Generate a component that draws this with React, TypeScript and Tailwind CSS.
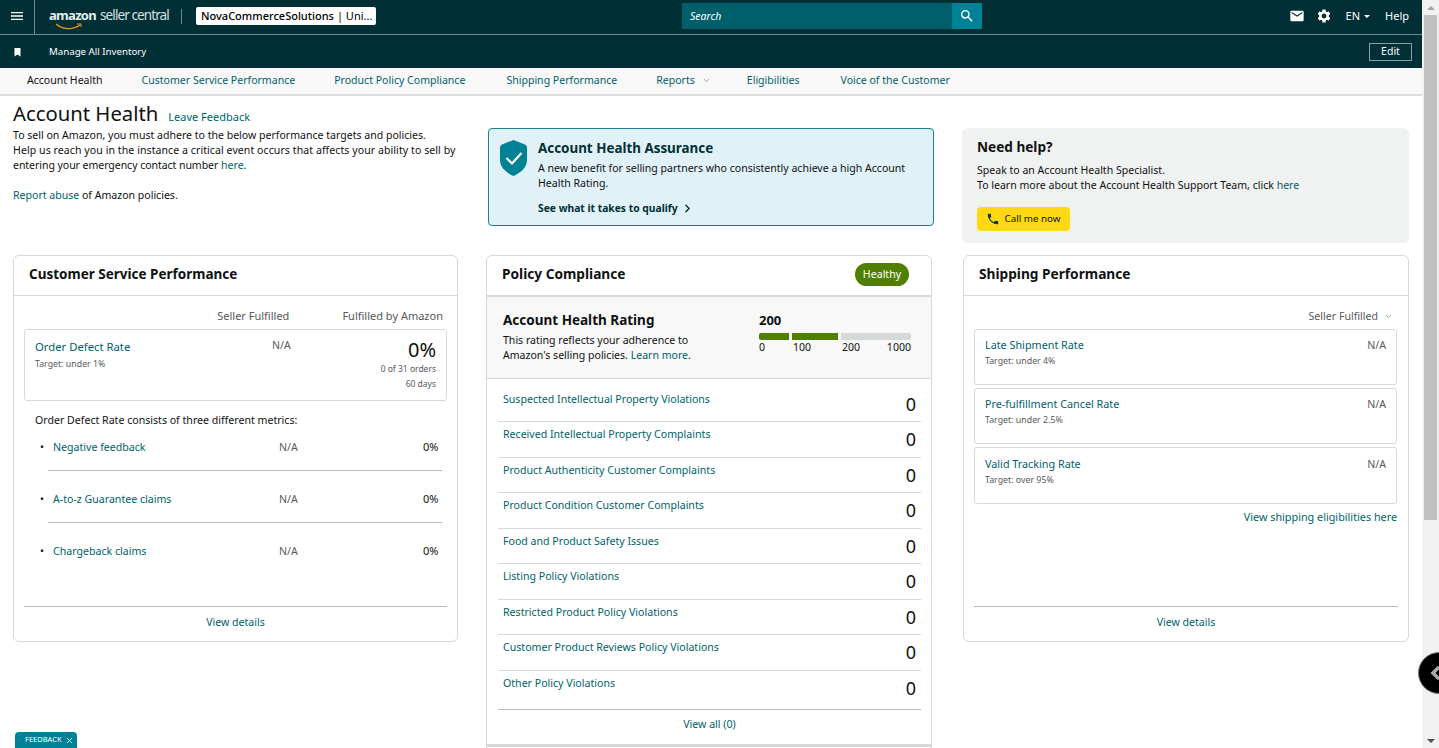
import { ChevronDown, ChevronRight, X } from 'lucide-react';
import { MdEmail, MdMenu, MdPhone, MdSearch, MdSettings } from 'react-icons/md';

const policyRows = [
  'Suspected Intellectual Property Violations',
  'Received Intellectual Property Complaints',
  'Product Authenticity Customer Complaints',
  'Product Condition Customer Complaints',
  'Food and Product Safety Issues',
  'Listing Policy Violations',
  'Restricted Product Policy Violations',
  'Customer Product Reviews Policy Violations',
  'Other Policy Violations',
];

const shipping = [
  { name: 'Late Shipment Rate', target: 'Target: under 4%' },
  { name: 'Pre-fulfillment Cancel Rate', target: 'Target: under 2.5%' },
  { name: 'Valid Tracking Rate', target: 'Target: over 95%' },
];

function Logo() {
  return (
    <div className="relative flex items-baseline whitespace-nowrap leading-none text-[#e6eeee]">
      <span className="text-[13px] font-bold tracking-[-0.7px]">amazon</span>
      <span className="ml-[4px] text-[13.5px] tracking-[-0.9px] text-[#d5e0e0]">seller central</span>
      <svg className="absolute left-[6px] top-[14px]" width="28" height="8" viewBox="0 0 28 8" fill="none">
        <path d="M1 1c7 6 17 6 24 1" stroke="#e5911b" strokeWidth="1.5" />
        <path d="M22 1h4v3" stroke="#e5911b" strokeWidth="1.1" />
      </svg>
    </div>
  );
}

function TopBar() {
  return (
    <div className="flex h-[35px] items-center border-b border-[#6f8a8e] bg-[#002f36] text-white">
      <div className="flex h-full w-[35px] items-center justify-center border-r border-[#6f8a8e] pb-[2px]">
        <MdMenu size={16} />
      </div>
      <div className="flex h-full flex-1 items-center pb-[2px]">
        <div className="ml-[14px] w-[121px]">
          <Logo />
        </div>
        <div className="ml-[11px] h-[15px] w-px bg-[#6f8a8e]" />
        <div className="ml-[14px] flex h-[18px] w-[180px] items-center whitespace-nowrap rounded-[2px] bg-white px-[5px] text-[11px] text-black">
          <span className="font-medium">NovaCommerceSolutions</span>
          <span className="ml-[3px]">| Uni...</span>
        </div>
        <div className="ml-[306px] flex h-[26px] w-[300px]">
          <div className="flex flex-1 items-center bg-[#005f6b] pl-2 pt-[1px] text-[10.5px] italic text-white">Search</div>
          <div className="flex w-[30px] items-center justify-center bg-[#008296]">
            <MdSearch size={16} />
          </div>
        </div>
        <div className="ml-auto flex items-center pr-[13px] text-[11px]">
          <MdEmail size={16} />
          <MdSettings size={16} className="ml-[11px]" />
          <span className="ml-[14px]">EN</span>
          <span className="ml-[4px] h-0 w-0 border-x-[3.5px] border-t-[3.5px] border-x-transparent border-t-white" />
          <span className="ml-[15px]">Help</span>
        </div>
      </div>
    </div>
  );
}

function ShortcutBar() {
  return (
    <div className="flex h-[33px] items-center bg-[#002f36] text-[9.7px] text-white">
      <svg className="ml-[13px]" width="9" height="10" viewBox="0 0 9 10">
        <path d="M1.5 1h6v8.5L4.5 7.5l-3 2z" fill="white" />
      </svg>
      <span className="ml-[27px] pt-[1px]">Manage All Inventory</span>
      <div className="ml-auto mr-[10px] flex h-[18px] w-[43px] items-center justify-center border border-[#8a9fa3] text-[10.5px]">
        Edit
      </div>
    </div>
  );
}

function TabBar() {
  return (
    <div className="flex h-[28px] items-center border-b-2 border-[#dddddd] bg-[#f8f8f8] pb-[1px] pl-[27px] text-[10.55px]">
      <span className="text-[#0f1111]">Account Health</span>
      <span className="ml-[39px] text-[#005f6b]">Customer Service Performance</span>
      <span className="ml-[39px] text-[#005f6b]">Product Policy Compliance</span>
      <span className="ml-[41px] text-[#005f6b]">Shipping Performance</span>
      <span className="ml-[39px] text-[#005f6b]">Reports</span>
      <ChevronDown size={9} strokeWidth={2.5} className="ml-[7px] text-[#999999]" />
      <span className="ml-[36px] text-[#005f6b]">Eligibilities</span>
      <span className="ml-[41px] text-[#005f6b]">Voice of the Customer</span>
    </div>
  );
}

function Intro() {
  return (
    <div className="grid grid-cols-[462px_487px_447px] items-start">
      <div className="pt-[4px]">
        <div className="flex items-baseline">
          <h1 className="text-[20.3px] leading-[26px] text-[#0f1111]">Account Health</h1>
          <span className="ml-[10px] text-[11px] text-[#005f6b]">Leave Feedback</span>
        </div>
        <p className="mt-[2px] text-[10.55px] leading-[15px] text-[#0f1111]">
          To sell on Amazon, you must adhere to the below performance targets and policies.
          <br />
          <span className="tracking-[0.07px]">Help us reach you in the instance a critical event occurs that affects your ability to sell by</span>
          <br />
          <span className="tracking-[-0.06px]">entering your emergency contact number</span> <span className="text-[#005f6b]">here</span>.
        </p>
        <p className="mt-[15px] text-[10.55px] leading-[15px] text-[#0f1111]">
          <span className="text-[#005f6b]">Report abuse</span> of Amazon policies.
        </p>
      </div>
      <div className="relative ml-[13px] mt-[32px] h-[98px] w-[446px] rounded-[4px] border border-[#1e7f8e] bg-[#e0f2f8] pl-[49px] pt-[11px]">
        <svg className="absolute left-[11px] top-[11px]" width="27" height="36" viewBox="0 0 27 36">
          <path d="M13.5 0 25 4.5q2 .8 2 3V20c0 8-7 13-13.5 16C7 33 0 28 0 20V7.5q0-2.2 2-3z" fill="#008296" />
          <path d="m6.5 18 5.5 5.5 9.5-10.5" stroke="white" strokeWidth="2.2" fill="none" />
        </svg>
        <div className="text-[13.4px] font-bold leading-[17px] text-[#002f36]">Account Health Assurance</div>
        <p className="mt-[4px] text-[10.55px] leading-[15px] text-[#0f1111]">
          A new benefit for selling partners who consistently achieve a high Account
          <br />
          Health Rating.
        </p>
        <div className="mt-[10px] flex items-center text-[10.3px] font-bold text-[#002f36]">
          See what it takes to qualify
          <ChevronRight size={13} strokeWidth={2.5} className="ml-[3px]" />
        </div>
      </div>
      <div className="mt-[32px] h-[115px] w-[447px] rounded-[6px] bg-[#f0f1f1] pl-[15px] pt-[10px]">
        <div className="text-[13.6px] font-bold leading-[17px] text-[#0f1111]">Need help?</div>
        <p className="mt-[8px] text-[10.55px] leading-[15px] text-[#0f1111]">
          Speak to an Account Health Specialist.
          <br />
          To learn more about the Account Health Support Team, click <span className="text-[#005f6b]">here</span>
        </p>
        <button className="mt-[14px] flex h-[24px] w-[93px] items-center justify-center rounded-[4px] bg-[#ffd814] text-[9.8px] text-[#0f1111]">
          <MdPhone size={14} className="mr-[4px] text-[#0f3d36]" />
          Call me now
        </button>
      </div>
    </div>
  );
}

function MetricRow({ name, rowClass }: { name: string; rowClass: string }) {
  return (
    <div className={`ml-[34px] mr-[15px] flex pl-[5px] text-[10.6px] leading-[15px] ${rowClass}`}>
      <span className="-ml-[13px] w-[13px] text-[#0f1111]">•</span>
      <span className="w-[226px] text-[#005f6b]">{name}</span>
      <span className="w-[40px] text-[#565959]">N/A</span>
      <span className="-mt-[1px] flex-1 pr-[4px] text-right text-[11px] tracking-tight text-[#0f1111]">0%</span>
    </div>
  );
}

function CustomerCard() {
  return (
    <div className="flex h-[387px] w-[445px] flex-col rounded-[6px] border border-[#d5d9d9] bg-white">
      <div className="flex h-[40px] shrink-0 items-center border-b border-[#d5d9d9] pb-[2px] pl-[15px] text-[13.5px] font-bold text-[#0f1111]">
        Customer Service Performance
      </div>
      <div className="flex justify-end px-[14px] pt-[12px] text-[11px] leading-[15px] text-[#565959]">
        <span className="mr-[53px]">Seller Fulfilled</span>
        <span>Fulfilled by Amazon</span>
      </div>
      <div className="mx-[10px] mt-[6px] flex h-[72px] rounded-[3px] border border-[#d5d9d9] px-[10px] pt-[9px]">
        <div className="w-[237px]">
          <div className="text-[11.3px] leading-[16px] text-[#005f6b]">Order Defect Rate</div>
          <div className="mt-[3px] text-[8.8px] leading-[12px] text-[#565959]">Target: under 1%</div>
        </div>
        <div className="-mt-[1px] w-[40px] text-[10.55px] leading-[15px] text-[#565959]">N/A</div>
        <div className="flex-1 text-right">
          <div className="text-[20px] leading-[22px] text-[#0f1111]">0%</div>
          <div className="text-[8.5px] leading-[15px] text-[#565959]">0 of 31 orders</div>
          <div className="text-[8.5px] leading-[15px] text-[#565959]">60 days</div>
        </div>
      </div>
      <div className="ml-[21px] mt-[12px] text-[10.6px] leading-[15px] text-[#0f1111]">
        Order Defect Rate consists of three different metrics:
      </div>
      <MetricRow name="Negative feedback" rowClass="h-[43px] border-b border-[#bbbbbb] pt-[12px]" />
      <MetricRow name="A-to-z Guarantee claims" rowClass="h-[52px] border-b border-[#bbbbbb] pt-[21px]" />
      <MetricRow name="Chargeback claims" rowClass="h-[52px] pt-[21px]" />
      <div className="mx-[10px] mt-auto flex h-[35px] items-center justify-center border-t border-[#bbbbbb] pb-[3px] text-[10.6px] text-[#005f6b]">
        View details
      </div>
    </div>
  );
}

function PolicyCard() {
  return (
    <div className="ml-[28px] w-[446px] rounded-t-[6px] border border-[#d5d9d9] bg-white">
      <div className="flex h-[41px] items-center justify-between border-b-2 border-[#d5d9d9] pb-[1px] pl-[15px] pr-[22px]">
        <span className="pb-[1px] text-[13.7px] font-bold text-[#0f1111]">Policy Compliance</span>
        <span className="mb-[1px] flex h-[23px] w-[54px] items-center justify-center rounded-full bg-[#507f00] text-[10.6px] text-white">
          Healthy
        </span>
      </div>
      <div className="flex h-[82px] border-b border-[#d5d9d9] bg-[#f8f8f8] pl-[16px] pt-[15px]">
        <div className="w-[256px]">
          <div className="text-[13.5px] font-bold leading-[17px] text-[#0f1111]">Account Health Rating</div>
          <p className="mt-[4px] text-[10.55px] leading-[15px] text-[#0f1111]">
            This rating reflects your adherence to
            <br />
            Amazon's selling policies. <span className="text-[#005f6b]">Learn more</span>.
          </p>
        </div>
        <div className="w-[152px]">
          <div className="text-[13px] font-bold leading-[17px] text-[#0f1111]">200</div>
          <div className="mt-[4px] flex gap-[3px]">
            <div className="h-[7px] w-[30px] rounded-l-[2px] bg-[#507f00]" />
            <div className="h-[7px] w-[46px] bg-[#507f00]" />
            <div className="h-[7px] w-[70px] rounded-r-[2px] bg-[#d5d9d9]" />
          </div>
          <div className="relative h-[14px] w-[152px] text-[10.55px] leading-[14px] text-[#0f1111]">
            <span>0</span>
            <span className="absolute left-[34px]">100</span>
            <span className="absolute left-[83px]">200</span>
            <span className="absolute right-[0px]">1000</span>
          </div>
        </div>
      </div>
      <div className="pl-[11px] pr-[10px] pt-[7.6px]">
        <div>
          {policyRows.map((r) => (
            <div
              key={r}
              className="flex h-[35.5px] border-b border-[#d5d9d9] pl-[5px] pr-[5px] pt-[5px] last:h-[39.5px] last:border-[#bbbbbb]"
            >
              <span className="flex-1 text-[10.6px] leading-[15px] text-[#005f6b]">{r}</span>
              <span className="mt-[1px] text-[18px] leading-[22px] text-[#0f1111]">0</span>
            </div>
          ))}
        </div>
        <div className="flex h-[34px] items-center justify-center pb-[4px] text-[10.6px] text-[#005f6b]">View all (0)</div>
      </div>
      <div className="h-[8px] border-t-[3px] border-[#d5d9d9]" />
    </div>
  );
}

function ShippingCard() {
  return (
    <div className="ml-[31px] flex h-[387px] w-[446px] flex-col rounded-[6px] border border-[#d5d9d9] bg-white">
      <div className="flex h-[40px] shrink-0 items-center border-b border-[#d5d9d9] pb-[2px] pl-[15px] text-[13.7px] font-bold text-[#0f1111]">
        Shipping Performance
      </div>
      <div className="flex items-center justify-end pr-[15px] pt-[13px] text-[10.6px] leading-[15px] text-[#565959]">
        Seller Fulfilled
        <ChevronDown size={9} strokeWidth={2.5} className="ml-[6px] text-[#999999]" />
      </div>
      <div className="ml-[10px] mr-[11px] mt-[5px] flex flex-col gap-[3px]">
        {shipping.map((s) => (
          <div
            key={s.name}
            className="flex h-[56px] justify-between rounded-[3px] border border-[#d5d9d9] px-[10px] pt-[7px] last:h-[57px] last:pt-[8px]"
          >
            <div>
              <div className="text-[10.8px] leading-[15px] text-[#005f6b]">{s.name}</div>
              <div className="mt-[3px] text-[8.8px] leading-[12px] text-[#565959]">{s.target}</div>
            </div>
            <span className="pt-[1px] text-[10.6px] leading-[15px] text-[#565959]">N/A</span>
          </div>
        ))}
      </div>
      <div className="mt-[5px] pr-[11px] text-right text-[10.8px] leading-[15px] text-[#005f6b]">
        View shipping eligibilities here
      </div>
      <div className="mx-[10px] mt-auto flex h-[35px] items-center justify-center border-t border-[#bbbbbb] pb-[3px] text-[10.6px] text-[#005f6b]">
        View details
      </div>
    </div>
  );
}

function Scrollbar() {
  return (
    <div className="flex w-[17px] flex-col items-center bg-[#f1f1f1]">
      <div className="flex h-[15px] items-center">
        <span className="h-0 w-0 border-x-[4px] border-b-[4px] border-x-transparent border-b-[#a3a3a3]" />
      </div>
      <div className="h-[505px] w-[13px] bg-[#c1c1c1]" />
      <div className="mt-auto flex h-[15px] items-center">
        <span className="h-0 w-0 border-x-[4px] border-t-[4px] border-x-transparent border-t-[#505050]" />
      </div>
    </div>
  );
}

export default function App() {
  return (
    <div className="relative flex h-[748px] overflow-hidden bg-white font-['Noto_Sans',sans-serif]">
      <div className="w-[1422px] overflow-hidden">
        <TopBar />
        <ShortcutBar />
        <TabBar />
        <div className="px-[13px]">
          <Intro />
          <div className="mt-[12px] flex items-start">
            <CustomerCard />
            <PolicyCard />
            <ShippingCard />
          </div>
        </div>
      </div>
      <Scrollbar />
      <div className="absolute left-[15px] top-[732px] flex h-[16px] w-[62px] items-center rounded-t-[4px] bg-[#008296] pl-[10px] text-[7.5px] text-white">
        FEEDBACK
        <X size={9} className="ml-[3px]" />
      </div>
      <div className="absolute left-[1418px] top-[652px] flex h-[42px] w-[42px] items-center rounded-full border border-[#6b7a7c] bg-black pl-[11px]">
        <svg width="12" height="16" viewBox="0 0 12 16" fill="none">
          <path d="M9 2 3 8l6 6" stroke="#aaaaaa" strokeWidth="3.5" />
        </svg>
      </div>
    </div>
  );
}
